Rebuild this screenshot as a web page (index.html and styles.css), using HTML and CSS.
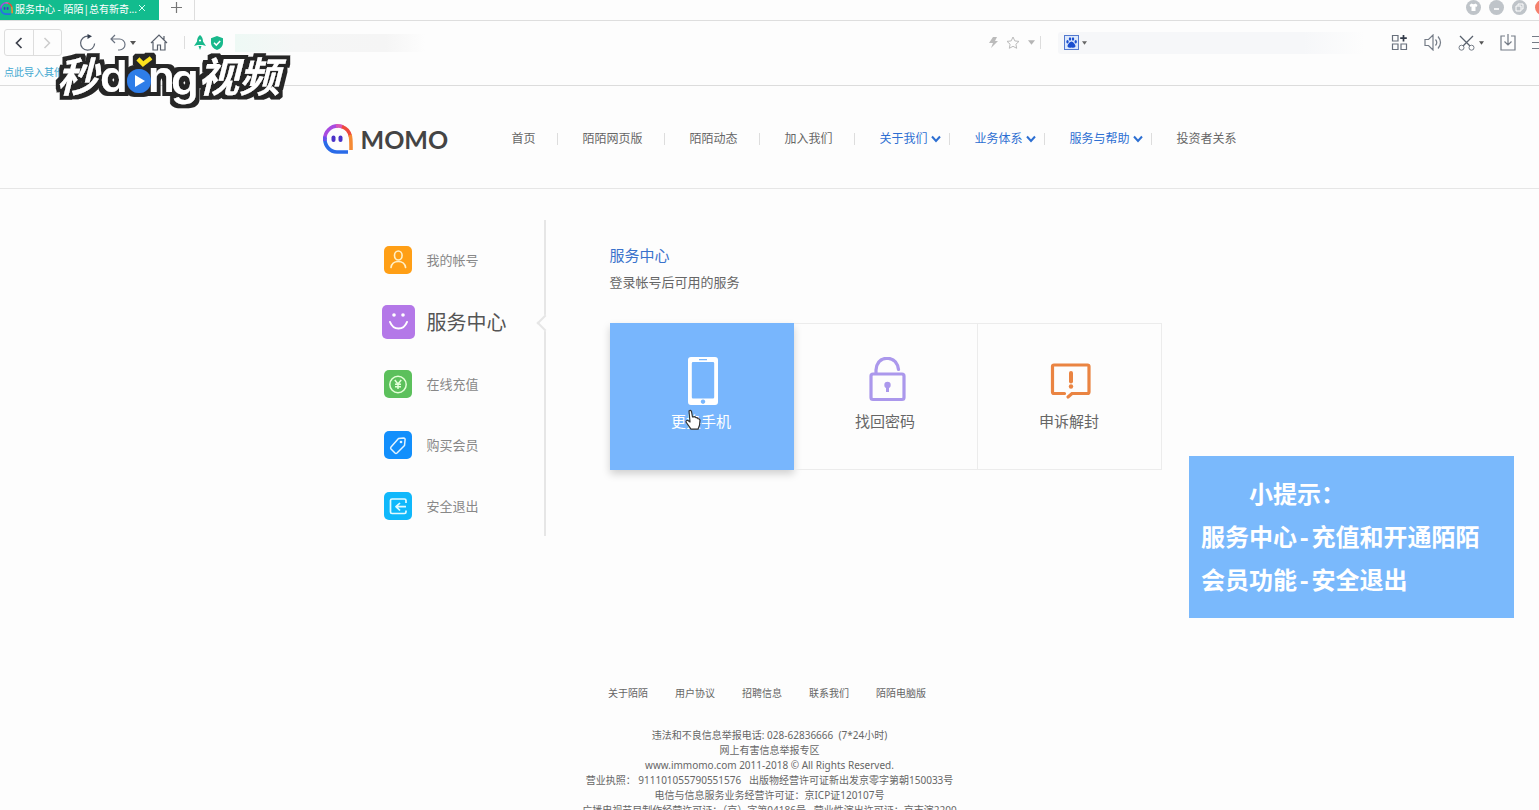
FILE: index.html
```html
<!DOCTYPE html>
<html lang="zh-CN">
<head>
<meta charset="utf-8">
<meta name="viewport" content="width=device-width, initial-scale=1">
<title>服务中心 - 陌陌</title>
<link rel="stylesheet" href="styles.css">
</head>
<body>
<svg class="defs" aria-hidden="true">
  <defs>
    <symbol id="momo" viewBox="0 0 30 30">
      <path d="M1.8 15A13.2 13 0 0 1 15 1.9" fill="none" stroke="#a84be0" stroke-width="3.6"/>
      <path d="M13 2A13 13 0 0 1 20 3" fill="none" stroke="#d858b8" stroke-width="3.6"/>
      <path d="M19 2.600A13 13 0 0 1 27.300 12" fill="none" stroke="#ee4a3c" stroke-width="3.6"/>
      <path d="M27 11Q28.200 14 28 26" fill="none" stroke="#f58a34" stroke-width="3.600"/>
      <path d="M1.800 14C1.600 22 7 28 14 28H25" fill="none" stroke="#2a6be8" stroke-width="3.600"/>
      <path d="M1.800 12.500V17" stroke="#6a50ea" stroke-width="3.600"/>
      <rect x="8.500" y="11.500" width="4" height="6.500" rx="2" fill="#4a32c8"/>
      <rect x="15.500" y="11.500" width="4" height="6.500" rx="2" fill="#4a32c8"/>
    </symbol>
    <symbol id="caret" viewBox="0 0 6 4"><path d="M0 0h6L3 4z" fill="currentColor"/></symbol>
    <symbol id="chevron" viewBox="0 0 10 8"><path d="M1 1.500L5 6L9 1.500" fill="none" stroke="currentColor" stroke-width="2"/></symbol>
  </defs>
</svg>

<div class="browser">
  <div class="tabs">
    <div class="tab">
      <svg class="tab-logo" width="13" height="13"><use href="#momo"/></svg>
      <span class="tab-title">服务中心 - 陌陌|总有新奇...</span>
      <button class="plain" aria-label="关闭标签"><svg width="8" height="8" viewBox="0 0 8 8"><path d="M1 1l6 6M7 1L1 7" stroke="#d6fff2" fill="none"/></svg></button>
    </div>
    <button class="plain new-tab" aria-label="新标签"><svg width="11" height="11" viewBox="0 0 11 11"><path d="M5.500 0v11M0 5.500h11" stroke="#777" fill="none" stroke-width="1.200"/></svg></button>
    <div class="window-buttons">
      <button class="plain" aria-label="皮肤"><svg width="15" height="15" viewBox="0 0 15 15"><circle cx="7.500" cy="7.500" r="7.500" fill="#bfc4c9"/><path d="M3.500 5l2-1.500q2 1.500 4 0l2 1.500-1 2-1-.4V11h-4V6.600l-1 .4z" fill="#fff"/></svg></button>
      <button class="plain" aria-label="最小化"><svg width="15" height="15" viewBox="0 0 15 15"><circle cx="7.500" cy="7.500" r="7.500" fill="#bfc4c9"/><path d="M5 9h5" stroke="#fff" stroke-width="1.600"/></svg></button>
      <button class="plain" aria-label="还原"><svg width="15" height="15" viewBox="0 0 15 15"><circle cx="7.500" cy="7.500" r="7.500" fill="#bfc4c9"/><path d="M6 5.500V4h5v5H9.500M4 6h5v5H4z" stroke="#fff" fill="none"/></svg></button>
      <button class="plain" aria-label="关闭"><svg width="15" height="15" viewBox="0 0 15 15"><circle cx="7.500" cy="7.500" r="7.500" fill="#f57f6c"/></svg></button>
    </div>
  </div>

  <div class="toolbar">
    <div class="history">
      <button aria-label="后退"><svg width="8" height="12" viewBox="0 0 8 12"><path d="M6.500 1L1.500 6l5 5" fill="none" stroke="#3c414c" stroke-width="1.700"/></svg></button>
      <button aria-label="前进"><svg width="8" height="12" viewBox="0 0 8 12"><path d="M1.500 1l5 5-5 5" fill="none" stroke="#ccc" stroke-width="1.500"/></svg></button>
    </div>
    <div class="nav-tools">
      <button class="plain" aria-label="刷新"><svg width="17" height="17" viewBox="0 0 17 17"><path d="M9 2.200A7 7 0 1 0 15.600 9.500" fill="none" stroke="#5a6270" stroke-width="1.200"/><path d="M8.500 0L13 2.300 8.500 5z" fill="#333d4d"/></svg></button>
      <button class="plain undo" aria-label="撤销"><svg width="16" height="17" viewBox="0 0 16 17"><path d="M5 1L1 5l4 4M1 5h8.500a5 5 0 0 1 0 11H8" fill="none" stroke="#6a7280" stroke-width="1.200"/></svg><svg width="6" height="4"><use href="#caret"/></svg></button>
      <button class="plain" aria-label="主页"><svg width="18" height="17" viewBox="0 0 18 17"><path d="M1 9L9 1l8 8M3 8v8h4.500v-5h3v5H15V8M14 6V2" fill="none" stroke="#59606c" stroke-width="1.200"/></svg></button>
    </div>
    <span class="sep"></span>
    <div class="badges">
      <svg width="12" height="15" viewBox="0 0 12 15"><path d="M6 0Q9 2 9 6.500l3 4.500-3.500-1H3.500L0 11l3-4.500Q3 2 6 0zM4.500 11h3L6 15z" fill="#19b98c"/><circle cx="6" cy="5.500" r="1.100" fill="#fff"/></svg>
      <svg width="12" height="14" viewBox="0 0 12 14"><path d="M6 0l6 2.200V7q0 4.500-6 7Q0 11.500 0 7V2.200z" fill="#19b98c"/><path d="M3 6.800l2.300 2.300L9.200 5" fill="none" stroke="#fff" stroke-width="1.500"/></svg>
    </div>
    <input class="address" type="text" aria-label="地址栏">
    <div class="address-tools">
      <svg width="9" height="11" viewBox="0 0 9 11"><path d="M4 0h4L6 4h3L2 11l2-5H0z" fill="#bbb"/></svg>
      <button class="plain" aria-label="收藏"><svg width="14" height="13" viewBox="0 0 14 13"><path d="M7 1l1.800 3.900 4.200.5-3.100 2.800.8 4.100L7 10.300l-3.700 2 .8-4.100L1 5.400l4.200-.5z" fill="none" stroke="#bbb"/></svg></button>
      <svg width="7" height="5"><use href="#caret"/></svg>
    </div>
    <span class="sep"></span>
    <div class="search">
      <button class="plain engine" aria-label="百度搜索">
        <svg width="15" height="15" viewBox="0 0 15 15"><rect x=".5" y=".5" width="14" height="14" fill="#dce8fb" stroke="#5379cf"/><path d="M7.500 6.500c1.500 0 4 3 4 4.500S10 13 7.500 12.500C5 13 3.500 12.500 3.500 11s2.500-4.500 4-4.500z" fill="#1b4fd0"/><ellipse cx="3.500" cy="6.800" rx="1.200" ry="1.700" fill="#1b4fd0"/><ellipse cx="6" cy="4" rx="1.200" ry="1.800" fill="#1b4fd0"/><ellipse cx="9" cy="4" rx="1.200" ry="1.800" fill="#1b4fd0"/><ellipse cx="11.700" cy="6.800" rx="1.200" ry="1.700" fill="#1b4fd0"/></svg>
        <svg width="5" height="4"><use href="#caret"/></svg>
      </button>
      <input type="text" aria-label="搜索">
    </div>
    <div class="extras">
      <button class="plain" aria-label="应用"><svg width="17" height="17" viewBox="0 0 17 17"><path d="M1.500 1.500h5.500V7H1.500zM1.500 10h5.500v5.500H1.500zM10 10h5.500v5.500H10z" fill="none" stroke="#68707c" stroke-width="1.200"/><path d="M12.500 1v6.500M9.200 4.200h6.600" stroke="#323a48" stroke-width="1.700"/></svg></button>
      <button class="plain" aria-label="声音"><svg width="18" height="17" viewBox="0 0 18 17"><path d="M1 5.500h3.500L9 1v15l-4.500-4.500H1zM11.500 5.500q2.500 3 0 6M14 2.500q5 6 0 12" fill="none" stroke="#757c87" stroke-width="1.200"/></svg></button>
      <button class="plain scissors" aria-label="截图"><svg width="17" height="16" viewBox="0 0 17 16"><path d="M2 1l10 10M15 1L5 11" fill="none" stroke="#59616d" stroke-width="1.300"/><circle cx="3.500" cy="12.700" r="2.500" fill="none" stroke="#757c87"/><circle cx="13.500" cy="12.700" r="2.500" fill="none" stroke="#757c87"/></svg><svg width="5" height="4"><use href="#caret"/></svg></button>
      <button class="plain" aria-label="下载"><svg width="16" height="17" viewBox="0 0 16 17"><path d="M5 2H1v14h14V2h-4M8 0v11M4.500 7.500L8 11l3.500-3.500" fill="none" stroke="#757c87" stroke-width="1.200"/></svg></button>
      <button class="plain" aria-label="菜单"><svg width="16" height="15" viewBox="0 0 16 15"><path d="M0 1.500h16M0 7.500h16M0 13.500h16" stroke="#757c87" stroke-width="1.200"/></svg></button>
    </div>
  </div>
  <div class="bookmarks"><a href="#">点此导入其他</a></div>
</div>

<header class="site-header">
  <div class="header-inner">
    <a class="brand" href="#"><svg width="30" height="30" aria-hidden="true"><use href="#momo"/></svg><span>MOMO</span></a>
    <nav>
      <ul class="menu">
        <li><a href="#">首页</a></li>
        <li><a href="#">陌陌网页版</a></li>
        <li><a href="#">陌陌动态</a></li>
        <li><a href="#">加入我们</a></li>
        <li class="drop"><button class="plain">关于我们<svg width="10" height="8"><use href="#chevron"/></svg></button></li>
        <li class="drop"><button class="plain">业务体系<svg width="10" height="8"><use href="#chevron"/></svg></button></li>
        <li class="drop"><button class="plain">服务与帮助<svg width="10" height="8"><use href="#chevron"/></svg></button></li>
        <li><a href="#">投资者关系</a></li>
      </ul>
    </nav>
  </div>
</header>

<main class="content">
  <nav class="side" aria-label="帐号">
    <ul>
      <li><a href="#"><span class="ico"><svg width="28" height="28" viewBox="0 0 28 28"><rect width="28" height="28" rx="5" fill="#ff9f16"/><g fill="none" stroke="#fff0c8" stroke-width="1.600" stroke-linecap="round"><ellipse cx="14.300" cy="9.500" rx="3.800" ry="4.500"/><path d="M7 21.500Q8 15.500 14.300 15.500T21.600 21.500"/></g></svg></span>我的帐号</a></li>
      <li class="active"><a href="#"><span class="ico"><svg width="33" height="34" viewBox="0 0 33 34"><rect width="33" height="34" rx="5" fill="#b478e8"/><circle cx="12" cy="10" r="1.800" fill="#fff"/><circle cx="21" cy="10" r="1.800" fill="#fff"/><path d="M8 17q2.500 6.500 8.500 6.500T25 17" fill="none" stroke="#fff" stroke-width="2" stroke-linecap="round"/></svg></span>服务中心</a></li>
      <li><a href="#"><span class="ico"><svg width="28" height="28" viewBox="0 0 28 28"><rect width="28" height="28" rx="5" fill="#5cc05c"/><g fill="none" stroke="#e4ffd8" stroke-width="1.500"><circle cx="14" cy="14.500" r="8.200"/><path d="M10.800 10l3.200 4 3.200-4M14 14v5M11 14.300h6M11 16.700h6"/></g></svg></span>在线充值</a></li>
      <li><a href="#"><span class="ico"><svg width="28" height="28" viewBox="0 0 28 28"><rect width="28" height="28" rx="5" fill="#128ffc"/><path d="M14.500 7.500l5-.5q2 0 1.500 2.500l-.5 5L13 22q-1 .8-2 0l-4-4q-.8-1 0-2z" fill="none" stroke="#e4f4ff" stroke-width="1.500" stroke-linejoin="round"/><circle cx="17" cy="11" r="1.300" fill="#e4f4ff"/></svg></span>购买会员</a></li>
      <li><a href="#"><span class="ico"><svg width="28" height="28" viewBox="0 0 28 28"><rect width="28" height="28" rx="5" fill="#10b8fb"/><path d="M22 11V8.500Q22 7 20.500 7H8Q6.500 7 6.500 8.500v11.500q0 1.500 1.500 1.500h12.500q1.500 0 1.500-1.500V18.500M22 14.700H12.500M16 11l-4 3.700 4 3.800" fill="none" stroke="#e4faff" stroke-width="1.700" stroke-linejoin="round"/></svg></span>安全退出</a></li>
    </ul>
  </nav>
  <section class="service">
    <h1>服务中心</h1>
    <p>登录帐号后可用的服务</p>
    <div class="tiles">
      <a class="tile selected" href="#">
        <svg width="48" height="48" viewBox="0 0 48 48"><path fill-rule="evenodd" d="M14 0h24q3 0 3 3v42q0 3-3 3H14q-3 0-3-3V3q0-3 3-3zM16 5q-1.200 0-1.200 1.200v34Q14.800 41.500 16 41.500h20q1.200 0 1.200-1.300v-34Q37.200 5 36 5zM22 2v1.200h8V2zM26 42.500a2.200 2.200 0 1 0 .01 0z" fill="#fff"/></svg>
        <span>更换手机</span>
        <svg class="pointer" width="16" height="22" viewBox="0 0 16 22" aria-hidden="true"><path d="M4 2q1.700-1.500 2.500.5l1 5.500 1.500-.3q1.500 0 1.800 1 1.700-.3 2.200 1 1.700 0 2 1.500l-.5 5-1.500 4H6L1 13q0-2 2-1.500l2 1.500z" fill="#fff" stroke="#333" stroke-width="1.200" stroke-linejoin="round"/></svg>
      </a>
      <a class="tile" href="#">
        <svg width="48" height="48" viewBox="0 0 48 48"><g fill="none" stroke="#ab98ec" stroke-width="3.200" stroke-linecap="round"><rect x="10" y="17" width="33" height="25.500" rx="2"/><path d="M15 16.500V13Q16 1.500 26.500 1.200 36 2 37.500 12.500"/></g><circle cx="26.500" cy="28" r="3.200" fill="#ab98ec"/><path d="M26.500 28v7" stroke="#ab98ec" stroke-width="3"/></svg>
        <span>找回密码</span>
      </a>
      <a class="tile" href="#">
        <svg width="48" height="48" viewBox="0 0 48 48"><path d="M19.500 36.500H9Q7.500 36.500 7.500 35V9.500Q7.500 8 9 8h33.500Q44 8 44 9.500V35q0 1.500-1.500 1.500H27l-4 3.500" fill="none" stroke="#ea8442" stroke-width="3.200" stroke-linecap="round"/><path d="M26 16v8.500" stroke="#ea8442" stroke-width="4" stroke-linecap="round"/><circle cx="26" cy="29.500" r="2.200" fill="#ea8442"/></svg>
        <span>申诉解封</span>
      </a>
    </div>
  </section>
</main>

<footer class="footer">
  <nav><a href="#">关于陌陌</a><a href="#">用户协议</a><a href="#">招聘信息</a><a href="#">联系我们</a><a href="#">陌陌电脑版</a></nav>
  <p>违法和不良信息举报电话: 028-62836666&nbsp; (7*24小时)</p>
  <p>网上有害信息举报专区</p>
  <p>www.immomo.com 2011-2018 © All Rights Reserved.</p>
  <p>营业执照： 911101055790551576&nbsp;&nbsp; 出版物经营许可证新出发京零字第朝150033号</p>
  <p>电信与信息服务业务经营许可证：京ICP证120107号</p>
  <p>广播电视节目制作经营许可证：（京）字第04186号&nbsp;&nbsp; 营业性演出许可证：京市演2200</p>
</footer>

<aside class="tip">
  <h2>小提示：</h2>
  <p>服务中心-充值和开通陌陌会员功能-安全退出</p>
</aside>

<svg class="watermark" width="250" height="70" viewBox="0 0 250 70" role="img" aria-label="秒dong视频">
  <filter id="outline" x="-5%" y="-10%" width="110%" height="120%">
    <feMorphology in="SourceAlpha" operator="dilate" radius="4" result="fat"/>
    <feFlood flood-color="#262626"/>
    <feComposite in2="fat" operator="in"/>
    <feMerge><feMergeNode/><feMergeNode in="SourceGraphic"/></feMerge>
  </filter>
  <g filter="url(#outline)">
    <text class="mark-cjk" x="13" y="47">秒</text>
    <text class="mark-latin" x="56" y="47">d</text>
    <text class="mark-latin" x="104" y="47">n</text>
    <text class="mark-latin" x="127" y="50">g</text>
    <text class="mark-cjk" x="154" y="47">视频</text>
    <circle cx="95" cy="36" r="12" fill="#2f7de8"/>
    <path d="M94 14l5 5 8-6" fill="none" stroke="#fce21c" stroke-width="4"/>
  </g>
  <path d="M91 30v12l10-6z" fill="#fff"/>
</svg>
</body>
</html>
```

FILE: styles.css
```css
* { box-sizing: border-box; }

body {
  position: relative;
  height: 100vh;
  margin: 0;
  overflow: hidden;
  background: #fdfdfd;
  color: #666;
  font-family: "Noto Sans", "Noto Sans CJK SC", sans-serif;
  font-size: 12px;
}

ul { margin: 0; padding: 0; list-style: none; }
h1, h2, p { margin: 0; font-weight: 400; }
a { color: inherit; text-decoration: none; }
svg { display: block; flex: none; }
input { min-width: 0; padding: 0; border: 0; font: inherit; }
.defs { position: absolute; width: 0; height: 0; }
.plain {
  display: flex;
  align-items: center;
  padding: 0;
  border: 0;
  background: none;
  color: inherit;
  font: inherit;
}

/* Browser frame */
.browser { border-bottom: 1px solid #dcdcdc; }
.tabs {
  display: flex;
  height: 21px;
  overflow: hidden;
  border-bottom: 1px solid #dedede;
}
.tab {
  display: flex;
  align-items: center;
  width: 159px;
  padding-bottom: 4px;
  background: #12bc8e;
  color: #fff;
  font-size: 10px;
}
.tab-logo { margin-right: 2px; }
.tab-title { width: 123px; overflow: hidden; white-space: nowrap; }
.new-tab {
  justify-content: center;
  width: 36px;
  padding-bottom: 5px;
  border-right: 1px solid #ddd;
}
.window-buttons {
  display: flex;
  gap: 8px;
  margin-left: auto;
  margin-right: -11px;
  padding-bottom: 5px;
}
.toolbar {
  display: flex;
  align-items: center;
  height: 43px;
  padding-left: 4px;
  overflow: hidden;
}
.history {
  display: flex;
  width: 58px;
  height: 27px;
  border: 1px solid #ddd;
  border-radius: 3px;
}
.history button {
  display: flex;
  flex: 1;
  align-items: center;
  justify-content: center;
  padding: 0;
  border: 0;
  background: none;
}
.history button + button { border-left: 1px solid #ddd; }
.nav-tools { display: flex; gap: 14px; margin: 0 16px 0 17px; color: #555; }
.undo { gap: 4px; }
.sep { width: 1px; height: 13px; background: #ddd; }
.badges { display: flex; align-items: center; gap: 5px; margin: 0 12px 0 9px; }
.address {
  flex: 1;
  height: 18px;
  background: linear-gradient(90deg, #eef9f5, #f5f6f6 60px, #f5f5f5 150px, transparent 190px);
}
.address-tools { display: flex; align-items: center; gap: 8px; margin-right: 5px; color: #b5b5b5; }
.search {
  display: flex;
  align-items: center;
  width: 20%;
  height: 22px;
  margin-left: 17px;
  padding-left: 6px;
  border-radius: 3px;
  background: linear-gradient(90deg, #f6f7f9 80%, transparent);
}
.search input { flex: 1; background: none; }
.engine { gap: 3px; color: #666; }
.extras { display: flex; gap: 16px; margin: 0 -9px 0 26px; color: #555; }
.scissors { gap: 4px; }
.bookmarks {
  height: 21px;
  padding-left: 4px;
  color: #3fa8d0;
  font-size: 10px;
  line-height: 16px;
}

/* Site header */
.site-header { border-bottom: 1px solid #e6e6e6; }
.header-inner {
  display: flex;
  align-items: center;
  max-width: 934px;
  height: 102px;
  margin: 0 auto;
  padding: 3px 0 0 20px;
}
.brand {
  display: flex;
  align-items: center;
  gap: 8px;
  width: 170px;
  color: #444;
  font: 700 25px/30px Lato, sans-serif;
}
.menu { display: flex; line-height: 16px; }
.menu li {
  display: flex;
  align-items: center;
  height: 12px;
  padding: 0 22px 0 24px;
  border-right: 1px solid #ddd;
  white-space: nowrap;
}
.menu .drop { padding-right: 8px; color: #2d6fd2; }
.menu .drop button { gap: 4px; }
.menu li:last-child { padding-right: 0; border: 0; }

/* Account area */
.content {
  display: flex;
  align-items: flex-start;
  max-width: 788px;
  margin: 0 auto;
  padding: 31px 2px 0 6px;
}
.side {
  position: relative;
  width: 164px;
  padding-top: 9px;
  border-right: 2px solid #e6e6e6;
}
.side a {
  display: flex;
  align-items: center;
  gap: 12px;
  height: 61px;
  color: #888;
  font-size: 13px;
}
.side .active a { height: 63px; color: #555; font-size: 20px; }
.side::after {
  content: "";
  position: absolute;
  top: 97px;
  right: -7px;
  width: 10px;
  height: 10px;
  border: solid #e6e6e6;
  border-width: 0 0 2px 2px;
  background: #fdfdfd;
  transform: rotate(45deg);
}
.ico { display: flex; justify-content: center; width: 33px; }
.service { flex: 1; margin-left: 64px; padding-top: 23px; }
.service h1 { color: #3a72cc; font-size: 15px; line-height: 24px; }
.service p { margin-top: 5px; font-size: 13px; line-height: 20px; }
.tiles {
  display: grid;
  grid-template-columns: repeat(3, 1fr);
  margin-top: 31px;
}
.tile {
  position: relative;
  display: flex;
  flex-direction: column;
  align-items: center;
  gap: 5px;
  padding: 33px 0 37px;
  border: solid #ececec;
  border-width: 1px 1px 1px 0;
  font-size: 15px;
  line-height: 22px;
}
.tile.selected {
  border-color: #78b6fd;
  background: #78b6fd;
  box-shadow: 0 4px 8px rgba(0, 0, 0, .18);
  color: #fff;
}
.pointer { position: absolute; top: 85px; left: 75px; }

/* Footer */
.footer { margin-top: 149px; font-size: 10px; text-align: center; white-space: nowrap; }
.footer nav {
  display: flex;
  justify-content: center;
  gap: 27px;
  margin-bottom: 27px;
  padding-right: 5px;
  line-height: 16px;
}
.footer p { line-height: 15px; }

/* Overlays */
.tip {
  position: absolute;
  top: 456px;
  right: 25px;
  width: 325px;
  padding: 19px 12px 14px;
  background: #7ab9fc;
  color: #fff;
  font-family: "Liberation Mono", "Noto Sans CJK SC", monospace;
  font-size: 24px;
  line-height: 43px;
}
.tip h2, .tip p { font-size: 24px; font-weight: 700; }
.tip h2 { padding-left: 48px; }
.watermark { position: absolute; top: 45px; left: 44px; }
.mark-cjk, .mark-latin { fill: #fff; font-weight: 700; }
.mark-cjk { font-size: 41px; font-style: italic; font-family: "Noto Sans CJK SC", sans-serif; }
.mark-latin { font-size: 44px; font-weight: 600; font-family: Inter, sans-serif; }
```
